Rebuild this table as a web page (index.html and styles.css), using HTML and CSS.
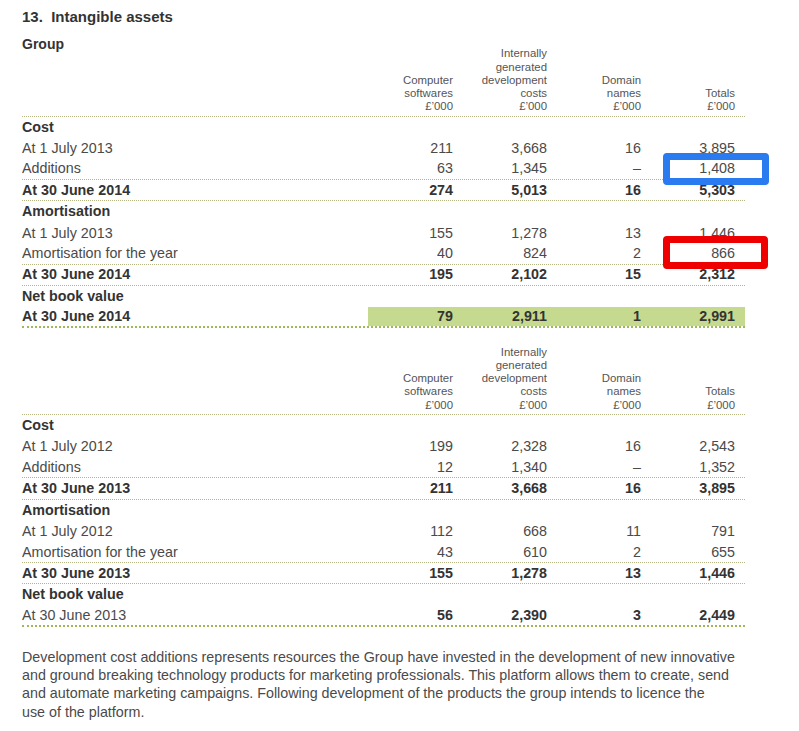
FILE: index.html
```html
<!DOCTYPE html>
<html lang="en">
<head>
<meta charset="utf-8">
<title>13. Intangible assets</title>
<link rel="stylesheet" href="styles.css">
</head>
<body>
<div class="page">
  <h1 class="title">13.&nbsp; Intangible assets</h1>

  <div class="fin">
    <div class="row head first">
      <div class="label group">Group</div>
      <div class="num">Computer<br>softwares<br>£’000</div>
      <div class="num">Internally<br>generated<br>development<br>costs<br>£’000</div>
      <div class="num">Domain<br>names<br>£’000</div>
      <div class="num">Totals<br>£’000</div>
    </div>
    <div class="row"><div class="label b">Cost</div></div>
    <div class="row"><div class="label">At 1 July 2013</div><div class="num">211</div><div class="num">3,668</div><div class="num">16</div><div class="num">3,895</div></div>
    <div class="row line"><div class="label">Additions</div><div class="num">63</div><div class="num">1,345</div><div class="num">–</div><div class="num">1,408</div></div>
    <div class="row line b"><div class="label">At 30 June 2014</div><div class="num">274</div><div class="num">5,013</div><div class="num">16</div><div class="num">5,303</div></div>
    <div class="row"><div class="label b">Amortisation</div></div>
    <div class="row"><div class="label">At 1 July 2013</div><div class="num">155</div><div class="num">1,278</div><div class="num">13</div><div class="num">1,446</div></div>
    <div class="row line"><div class="label">Amortisation for the year</div><div class="num">40</div><div class="num">824</div><div class="num">2</div><div class="num">866</div></div>
    <div class="row line b"><div class="label">At 30 June 2014</div><div class="num">195</div><div class="num">2,102</div><div class="num">15</div><div class="num">2,312</div></div>
    <div class="row"><div class="label b">Net book value</div></div>
    <div class="row final b hl"><div class="label">At 30 June 2014</div><div class="num">79</div><div class="num">2,911</div><div class="num">1</div><div class="num">2,991</div></div>
  </div>

  <div class="fin second">
    <div class="row head">
      <div class="label"></div>
      <div class="num">Computer<br>softwares<br>£’000</div>
      <div class="num">Internally<br>generated<br>development<br>costs<br>£’000</div>
      <div class="num">Domain<br>names<br>£’000</div>
      <div class="num">Totals<br>£’000</div>
    </div>
    <div class="row"><div class="label b">Cost</div></div>
    <div class="row"><div class="label">At 1 July 2012</div><div class="num">199</div><div class="num">2,328</div><div class="num">16</div><div class="num">2,543</div></div>
    <div class="row line"><div class="label">Additions</div><div class="num">12</div><div class="num">1,340</div><div class="num">–</div><div class="num">1,352</div></div>
    <div class="row line b"><div class="label">At 30 June 2013</div><div class="num">211</div><div class="num">3,668</div><div class="num">16</div><div class="num">3,895</div></div>
    <div class="row"><div class="label b">Amortisation</div></div>
    <div class="row"><div class="label">At 1 July 2012</div><div class="num">112</div><div class="num">668</div><div class="num">11</div><div class="num">791</div></div>
    <div class="row line"><div class="label">Amortisation for the year</div><div class="num">43</div><div class="num">610</div><div class="num">2</div><div class="num">655</div></div>
    <div class="row line b"><div class="label">At 30 June 2013</div><div class="num">155</div><div class="num">1,278</div><div class="num">13</div><div class="num">1,446</div></div>
    <div class="row"><div class="label b">Net book value</div></div>
    <div class="row final"><div class="label">At 30 June 2013</div><div class="num b">56</div><div class="num b">2,390</div><div class="num b">3</div><div class="num b">2,449</div></div>
  </div>

  <p class="note">Development cost additions represents resources the Group have invested in the development of new innovative and ground breaking technology products for marketing professionals. This platform allows them to create, send and automate marketing campaigns. Following development of the products the group intends to licence the<br>use of the platform.</p>

  <div class="mark mark-blue"></div>
  <div class="mark mark-red"></div>
</div>
</body>
</html>
```
FILE: styles.css
```css
html, body {
  margin: 0;
  padding: 0;
  background: #ffffff;
}

.page {
  position: relative;
  width: 799px;
  min-height: 731px;
  padding: 8px 0 0 22px;
  box-sizing: border-box;
  font-family: "Liberation Sans", Arial, Helvetica, sans-serif;
  color: #4a4a4a;
}

.title {
  margin: 0;
  font-size: 15px;
  line-height: 18px;
  font-weight: bold;
  color: #333333;
}

.fin {
  width: 723px;
  margin-top: 9px;
}

.fin.second {
  margin-top: 17.5px;
}

.row {
  display: grid;
  grid-template-columns: 346px 85px 94px 94px 104px;
  height: 21.2px;
  box-sizing: border-box;
  align-items: center;
  font-size: 14.3px;
  line-height: 17px;
}

.row .num {
  text-align: right;
}

.row .num:last-child {
  padding-right: 10px;
}

.b {
  font-weight: bold;
  color: #333333;
}

.line {
  border-bottom: 1px dotted #b3b585;
}

.head {
  height: 69px;
  align-items: end;
  border-bottom: 1px dotted #b3b585;
  font-size: 11.4px;
  line-height: 13.2px;
  color: #555555;
}

.head.first {
  height: 81.5px;
}

.head .num {
  padding-bottom: 2px;
}

.head .group {
  align-self: start;
  font-size: 14px;
  line-height: 18px;
  font-weight: bold;
  color: #333333;
}

.final {
  border-bottom: 2px dotted #9cbb58;
}

.hl .num {
  background: #c5da8f;
  height: 100%;
  display: flex;
  align-items: center;
  justify-content: flex-end;
}

.note {
  width: 723px;
  margin: 21px 0 0 0;
  font-size: 14.3px;
  line-height: 18.3px;
  color: #4a4a4a;
}

.mark {
  position: absolute;
  box-sizing: border-box;
  border-width: 7px;
  border-style: solid;
  border-radius: 4px;
}

.mark-blue {
  left: 663px;
  top: 153px;
  width: 106px;
  height: 32px;
  border-color: #2a7af0;
}

.mark-red {
  left: 663px;
  top: 236px;
  width: 105px;
  height: 33px;
  border-color: #ee0000;
}
```
